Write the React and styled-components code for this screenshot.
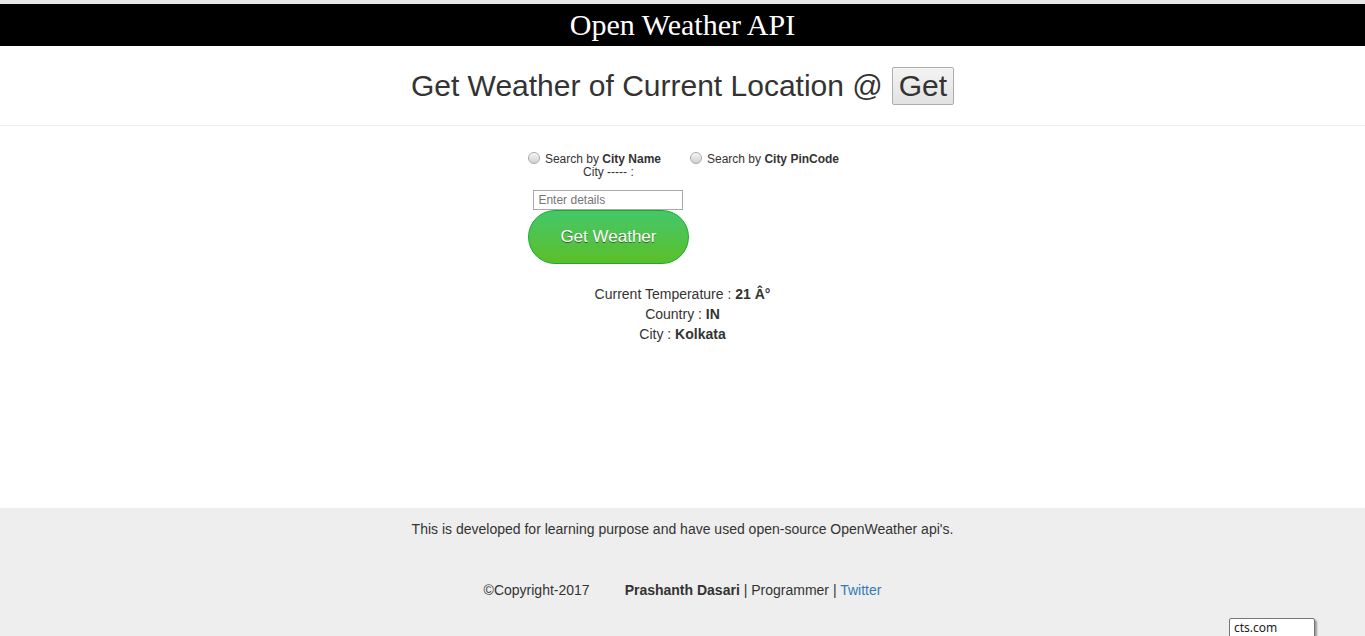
import React, { useState } from 'react';
import styled, { createGlobalStyle } from 'styled-components';

//----------------  Global styles  ----------------//
const GlobalStyle = createGlobalStyle`
    html, body {
        margin: 0;
        padding: 0;
        background: #fff;
    }
    body {
        font-family: 'Liberation Sans', Arial, sans-serif;
        font-size: 14px;
        line-height: 20px;
        color: #333;
    }
`;

//----------------  Layout  ----------------//
const Page = styled.div`
    position: relative;
    min-height: 636px;
    display: flex;
    flex-direction: column;
    overflow: hidden;
`;

// Black title bar
const TitleBar = styled.header`
    border-top: 4px solid #e8e8e8;
    background-color: #000;
    height: 42px;

    h1 {
        margin: 0;
        color: #fff;
        font-family: 'Liberation Serif', 'Times New Roman', serif;
        font-weight: normal;
        font-size: 30px;
        line-height: 42px;
        text-align: center;
    }
`;

// Current location row
const LocationRow = styled.section`
    height: 79px;
    border-bottom: 1px solid #eee;

    display: flex;
    justify-content: center;
    align-items: center;

    h2 {
        margin: 0;
        font-size: 30px;
        font-weight: normal;
        line-height: 36px;
        color: #333;
    }
`;

const GetButton = styled.button`
    font-family: 'Liberation Sans', Arial, sans-serif;
    font-size: 30px;
    color: #333;
    height: 38px;
    padding: 0 6px;
    margin-left: 9px;
    vertical-align: middle;
    border: 1px solid #adadad;
    border-radius: 2px;
    background: linear-gradient(#f4f4f4, #e2e2e2);
    cursor: pointer;
`;

// Search area
const Main = styled.main`
    padding: 23px 0 164px;
    display: flex;
    flex-direction: column;
    align-items: center;
`;

const SearchForm = styled.form`
    display: flex;
    flex-direction: column;
    align-items: flex-start;
    padding-left: 2px;
    font-size: 12px;
    line-height: 14px;
    color: #333;
`;

const RadioRow = styled.div`
    height: 16px;
    display: flex;
    align-items: center;
    gap: 29px;
`;

const RadioLabel = styled.label`
    display: flex;
    align-items: center;
    cursor: pointer;

    span {
        margin-top: 4px;
    }
`;

// Grey old-style radio dot
const RadioDot = styled.input`
    appearance: none;
    box-sizing: border-box;
    width: 12px;
    height: 12px;
    margin: 2px 5px 0 0;
    border: 1px solid #a7a7a7;
    border-radius: 50%;
    background: linear-gradient(#f3f3f3, #d2d2d2);
    box-shadow: inset 0 1px 1px rgba(255, 255, 255, 0.8);
    cursor: pointer;

    &:checked {
        background: radial-gradient(circle, #333 0 2.5px, #e6e6e6 3px);
    }
`;

const FieldColumn = styled.div`
    width: 161px;
    display: flex;
    flex-direction: column;
    align-items: center;
    text-align: center;
`;

const FieldLabel = styled.span`
    display: block;
    margin-bottom: 11px;
`;

const DetailsInput = styled.input`
    box-sizing: border-box;
    width: 150px;
    height: 20px;
    padding: 1px 4px;
    border: 1px solid #a9a9a9;
    font-family: 'Liberation Sans', Arial, sans-serif;
    font-size: 12px;
    color: #333;

    &::placeholder {
        color: #757575;
    }
`;

const WeatherButton = styled.button`
    box-sizing: border-box;
    width: 161px;
    height: 54px;
    border: 1px solid #18ab29;
    border-radius: 28px;
    background: linear-gradient(to bottom, #44c767 5%, #5cbf2a 100%);
    color: #fff;
    font-family: 'Liberation Sans', Arial, sans-serif;
    font-size: 17px;
    text-shadow: 0 1px 0 #2f6627;
    cursor: pointer;
`;

const Results = styled.div`
    margin-top: 20px;
    text-align: center;

    p {
        margin: 0;
    }
    b {
        font-weight: bold;
    }
`;

// Footer
const Footer = styled.footer`
    flex: 1;
    background-color: #eee;
    padding-top: 11px;
    text-align: center;

    p {
        margin: 0;
    }
`;

const CreditLine = styled.p`
    margin-top: 41px !important;
`;

const Copyright = styled.span`
    margin-right: 35px;
`;

const TwitterLink = styled.a`
    color: #337ab7;
    text-decoration: none;
`;

// Browser autocomplete hint in the corner
const HintPopup = styled.div`
    position: absolute;
    left: 1229px;
    top: 618px;
    width: 86px;
    height: 26px;
    box-sizing: border-box;
    padding: 1px 4px;
    background: #fff;
    border: 1px solid #767676;
    border-radius: 2px;
    box-shadow: 2px 2px 2px rgba(0, 0, 0, 0.35);
    font-family: 'Noto Sans', 'Open Sans', sans-serif;
    font-size: 12px;
    line-height: 16px;
    color: #222;
`;

// Exported component
const App = () => {
    //----------------  Setting States  ----------------//
    const [searchBy, setSearchBy] = useState('');
    const [details, setDetails] = useState('');

    const weather = { temp: '21 Â°', country: 'IN', city: 'Kolkata' };

    return (
        <Page>
            <GlobalStyle />
            <TitleBar>
                <h1>Open Weather API</h1>
            </TitleBar>

            <LocationRow>
                <h2>Get Weather of Current Location @</h2>
                <GetButton type="button">Get</GetButton>
            </LocationRow>

            <Main>
                <SearchForm onSubmit={(e) => e.preventDefault()}>
                    <RadioRow>
                        <RadioLabel>
                            <RadioDot
                                type="radio"
                                name="searchBy"
                                checked={searchBy === 'name'}
                                onChange={() => setSearchBy('name')}
                            />
                            <span>Search by <b>City Name</b></span>
                        </RadioLabel>
                        <RadioLabel>
                            <RadioDot
                                type="radio"
                                name="searchBy"
                                checked={searchBy === 'pin'}
                                onChange={() => setSearchBy('pin')}
                            />
                            <span>Search by <b>City PinCode</b></span>
                        </RadioLabel>
                    </RadioRow>
                    <FieldColumn>
                        <FieldLabel>City ----- :</FieldLabel>
                        <DetailsInput
                            placeholder="Enter details"
                            value={details}
                            onChange={(e) => setDetails(e.target.value)}
                        />
                        <WeatherButton type="submit">Get Weather</WeatherButton>
                    </FieldColumn>
                </SearchForm>

                <Results>
                    <p>Current Temperature : <b>{weather.temp}</b></p>
                    <p>Country : <b>{weather.country}</b></p>
                    <p>City : <b>{weather.city}</b></p>
                </Results>
            </Main>

            <Footer>
                <p>This is developed for learning purpose and have used open-source OpenWeather api's.</p>
                <CreditLine>
                    <Copyright>©Copyright-2017</Copyright>
                    <b>Prashanth Dasari</b> | Programmer | <TwitterLink href="#">Twitter</TwitterLink>
                </CreditLine>
            </Footer>

            <HintPopup>cts.com</HintPopup>
        </Page>
    );
};

export default App;
